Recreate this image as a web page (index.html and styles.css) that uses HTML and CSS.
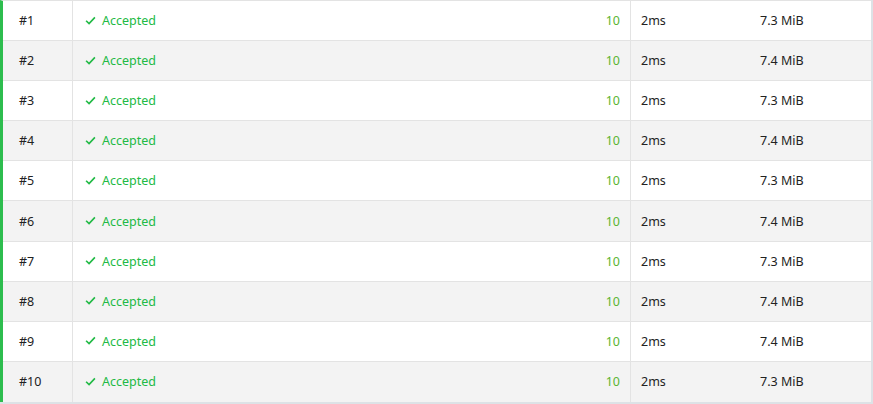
FILE: index.html
```html
<!DOCTYPE html>
<html>
<head>
<meta charset="utf-8">
<link rel="stylesheet" href="styles.css">
</head>
<body>
<div class="wrap">
  <div class="table">
    <div class="row"><div class="c id">#1</div><div class="c st"><span class="ok"><svg class="chk" viewBox="0 0 10 8"><path d="M1 4.2 L3.7 6.8 L9 1.2" /></svg>Accepted</span><span class="score">10</span></div><div class="c tm">2ms</div><div class="c mem">7.3 MiB</div></div>
    <div class="row"><div class="c id">#2</div><div class="c st"><span class="ok"><svg class="chk" viewBox="0 0 10 8"><path d="M1 4.2 L3.7 6.8 L9 1.2" /></svg>Accepted</span><span class="score">10</span></div><div class="c tm">2ms</div><div class="c mem">7.4 MiB</div></div>
    <div class="row"><div class="c id">#3</div><div class="c st"><span class="ok"><svg class="chk" viewBox="0 0 10 8"><path d="M1 4.2 L3.7 6.8 L9 1.2" /></svg>Accepted</span><span class="score">10</span></div><div class="c tm">2ms</div><div class="c mem">7.3 MiB</div></div>
    <div class="row"><div class="c id">#4</div><div class="c st"><span class="ok"><svg class="chk" viewBox="0 0 10 8"><path d="M1 4.2 L3.7 6.8 L9 1.2" /></svg>Accepted</span><span class="score">10</span></div><div class="c tm">2ms</div><div class="c mem">7.4 MiB</div></div>
    <div class="row"><div class="c id">#5</div><div class="c st"><span class="ok"><svg class="chk" viewBox="0 0 10 8"><path d="M1 4.2 L3.7 6.8 L9 1.2" /></svg>Accepted</span><span class="score">10</span></div><div class="c tm">2ms</div><div class="c mem">7.3 MiB</div></div>
    <div class="row"><div class="c id">#6</div><div class="c st"><span class="ok"><svg class="chk" viewBox="0 0 10 8"><path d="M1 4.2 L3.7 6.8 L9 1.2" /></svg>Accepted</span><span class="score">10</span></div><div class="c tm">2ms</div><div class="c mem">7.4 MiB</div></div>
    <div class="row"><div class="c id">#7</div><div class="c st"><span class="ok"><svg class="chk" viewBox="0 0 10 8"><path d="M1 4.2 L3.7 6.8 L9 1.2" /></svg>Accepted</span><span class="score">10</span></div><div class="c tm">2ms</div><div class="c mem">7.3 MiB</div></div>
    <div class="row"><div class="c id">#8</div><div class="c st"><span class="ok"><svg class="chk" viewBox="0 0 10 8"><path d="M1 4.2 L3.7 6.8 L9 1.2" /></svg>Accepted</span><span class="score">10</span></div><div class="c tm">2ms</div><div class="c mem">7.4 MiB</div></div>
    <div class="row"><div class="c id">#9</div><div class="c st"><span class="ok"><svg class="chk" viewBox="0 0 10 8"><path d="M1 4.2 L3.7 6.8 L9 1.2" /></svg>Accepted</span><span class="score">10</span></div><div class="c tm">2ms</div><div class="c mem">7.4 MiB</div></div>
    <div class="row"><div class="c id">#10</div><div class="c st"><span class="ok"><svg class="chk" viewBox="0 0 10 8"><path d="M1 4.2 L3.7 6.8 L9 1.2" /></svg>Accepted</span><span class="score">10</span></div><div class="c tm">2ms</div><div class="c mem">7.3 MiB</div></div>
  </div>
</div>
</body>
</html>
```
FILE: styles.css
```css
html, body {
  margin: 0;
  padding: 0;
  background: #dde2e6;
}
body {
  width: 873px;
  height: 404px;
  overflow: hidden;
  font-family: "Noto Sans", "Open Sans", "Liberation Sans", sans-serif;
  font-size: 12.5px;
  color: #222;
}
.wrap {
  width: 871px;
  background: #fff;
}
.table {
  display: flex;
  flex-direction: column;
  border-left: 3px solid #2dbd4e;
  border-top: 1px solid #e3e3e3;
}
.row {
  display: grid;
  grid-template-columns: 70px 558px 119px 120px;
  height: 40.1px;
  box-sizing: border-box;
  border-bottom: 1px solid #e3e3e3;
  background: #fff;
}
.row:nth-child(even) {
  background: #f3f3f3;
}
.row:last-child {
  border-bottom: none;
  height: 40px;
}
.c {
  display: flex;
  align-items: center;
  padding: 0 11px;
  white-space: nowrap;
}
.id {
  padding-left: 16px;
  border-right: 1px solid #e3e3e3;
}
.st {
  justify-content: space-between;
  border-right: 1px solid #e3e3e3;
  padding-left: 12px;
  padding-right: 10px;
}
.ok {
  display: flex;
  align-items: center;
  color: #21ba45;
}
.chk {
  width: 11px;
  height: 9px;
  margin-right: 6px;
  margin-bottom: 1px;
  fill: none;
  stroke: #21ba45;
  stroke-width: 1.5;
}
.score {
  color: #5bb531;
}
.tm {
  padding-left: 10px;
}
.mem {
  padding-left: 10px;
}
```
